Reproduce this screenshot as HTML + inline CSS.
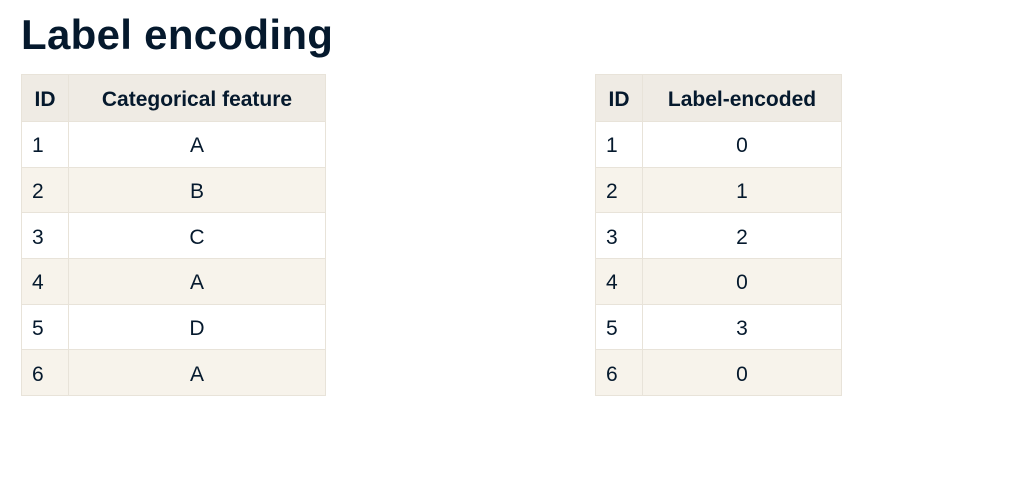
<!DOCTYPE html>
<html><head><style>
body{margin:0;width:1018px;height:495px;background:#fff;font-family:"Liberation Sans",sans-serif;color:#05192d;position:relative;overflow:hidden}
h1{position:absolute;left:21px;top:11px;margin:0;font-size:42px;font-weight:bold;letter-spacing:0.3px}
table{position:absolute;top:74px;border-collapse:collapse}
td,th{border:1.5px solid #e8e3d9;height:45.67px;padding:4px 10px 0;box-sizing:border-box;font-size:21px}
th{background:#efebe4;font-weight:bold;text-align:center;height:47px}
td{text-align:center}
td:first-child{text-align:left}
tr:nth-child(odd) td{background:#f7f3eb}
</style></head><body>
<h1>Label encoding</h1>
<table style="left:21px">
<tr><th style="width:47px">ID</th><th style="width:257px">Categorical feature</th></tr>
<tr><td>1</td><td>A</td></tr>
<tr><td>2</td><td>B</td></tr>
<tr><td>3</td><td>C</td></tr>
<tr><td>4</td><td>A</td></tr>
<tr><td>5</td><td>D</td></tr>
<tr><td>6</td><td>A</td></tr>
</table>
<table style="left:595px">
<tr><th style="width:47px">ID</th><th style="width:199px">Label-encoded</th></tr>
<tr><td>1</td><td>0</td></tr>
<tr><td>2</td><td>1</td></tr>
<tr><td>3</td><td>2</td></tr>
<tr><td>4</td><td>0</td></tr>
<tr><td>5</td><td>3</td></tr>
<tr><td>6</td><td>0</td></tr>
</table>
</body></html>
